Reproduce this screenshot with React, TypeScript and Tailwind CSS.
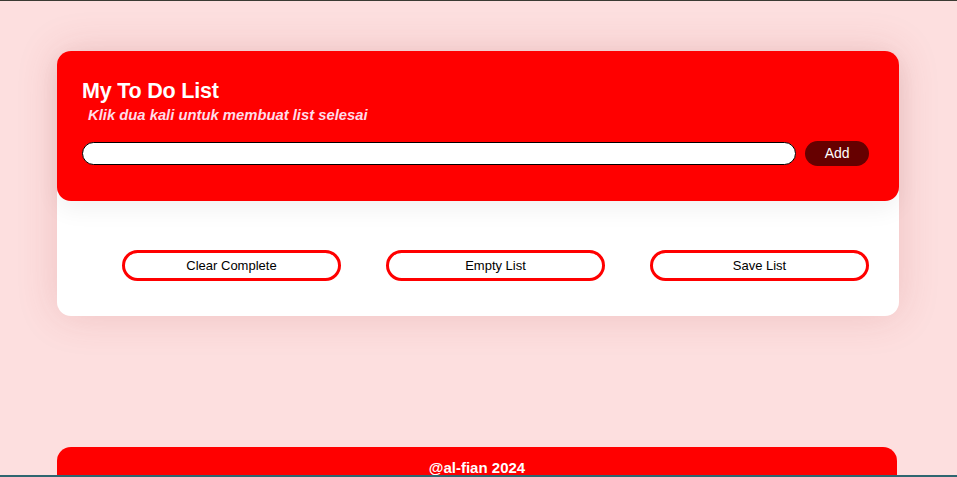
import React from "react";

const font = { fontFamily: '"Liberation Sans", Arial, sans-serif' };

export default function App() {
  return (
    <div
      className="h-[477px] w-full overflow-hidden flex flex-col bg-[#fddfdf] border-t border-[#3b3b33]"
      style={font}
    >
      <div className="flex-1 overflow-hidden">
        <div className="mt-[50px] ml-[57px] w-[842px] rounded-[14px] bg-white shadow-[0_0_40px_rgba(170,60,60,0.18)]">
          <div className="h-[150px] rounded-[14px] bg-[#ff0000] pl-[25px] pr-[30px] pt-[27px] shadow-[0_8px_24px_rgba(0,0,0,0.06)]">
            <h1 className="text-[21.5px] leading-[26px] font-bold tracking-[-0.2px] text-white">My To Do List</h1>
            <p className="ml-[6px] mt-[2px] text-[14.8px] leading-[18px] font-bold italic text-[#ffdce8]">
              Klik dua kali untuk membuat list selesai
            </p>
            <div className="mt-[17px] flex items-center gap-[9px]">
              <input
                type="text"
                className="h-[23px] w-[716px] rounded-full border border-black bg-white px-3 text-sm outline-none"
              />
              <button className="h-[25px] w-[64px] rounded-full bg-[#660000] text-[14px] text-white">
                Add
              </button>
            </div>
          </div>
          <div className="flex gap-[45px] pl-[65px] pt-[49px] pb-[35px]">
            <button className="h-[31px] w-[219px] rounded-full border-[3px] border-[#ff0000] text-[13px] text-black">
              Clear Complete
            </button>
            <button className="h-[31px] w-[219px] rounded-full border-[3px] border-[#ff0000] text-[13px] text-black">
              Empty List
            </button>
            <button className="h-[31px] w-[219px] rounded-full border-[3px] border-[#ff0000] text-[13px] text-black">
              Save List
            </button>
          </div>
        </div>
        <footer className="mt-[131px] ml-[57px] w-[840px] h-[60px] rounded-t-[14px] bg-[#ff0000] pt-[10px] text-center text-[15px] font-bold text-white">
          @al-fian 2024
        </footer>
      </div>
      <div className="h-[2px] bg-[#2e6670]" />
    </div>
  );
}
